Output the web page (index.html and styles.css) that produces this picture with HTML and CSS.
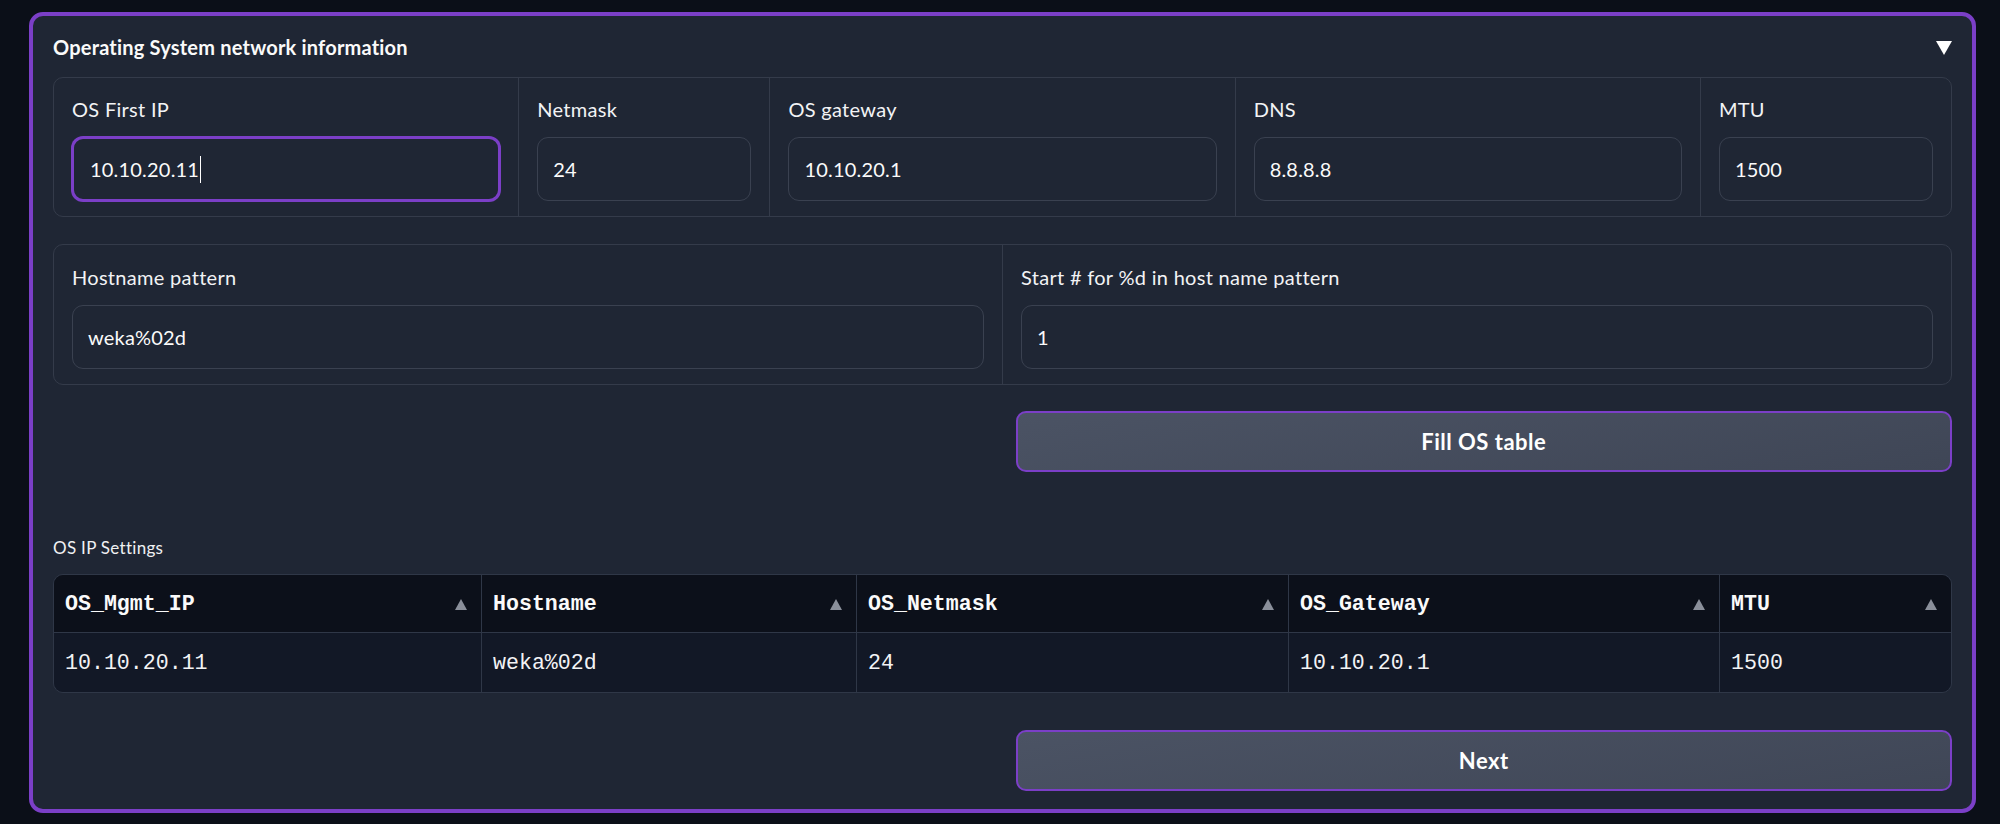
FILE: index.html
```html
<!DOCTYPE html>
<html lang="en">
<head>
<meta charset="utf-8">
<title>OS network</title>
<link rel="stylesheet" href="styles.css">
</head>
<body>
<div class="panel">
  <div class="panel-head">
    <span class="panel-title">Operating System network information</span>
    <svg class="caret-down" width="16" height="14" viewBox="0 0 16 14"><polygon points="0,0 16,0 8,14" fill="#ffffff"/></svg>
  </div>

  <div class="box">
    <div class="field w2">
      <div class="label">OS First IP</div>
      <div class="input focused"><span>10.10.20.11</span><span class="cursor"></span></div>
    </div>
    <div class="field w1">
      <div class="label">Netmask</div>
      <div class="input">24</div>
    </div>
    <div class="field w2">
      <div class="label">OS gateway</div>
      <div class="input">10.10.20.1</div>
    </div>
    <div class="field w2">
      <div class="label">DNS</div>
      <div class="input">8.8.8.8</div>
    </div>
    <div class="field w1">
      <div class="label">MTU</div>
      <div class="input">1500</div>
    </div>
  </div>

  <div class="box second">
    <div class="field w1">
      <div class="label">Hostname pattern</div>
      <div class="input">weka%02d</div>
    </div>
    <div class="field w1">
      <div class="label">Start # for %d in host name pattern</div>
      <div class="input">1</div>
    </div>
  </div>

  <div class="btn-row first-btn">
    <div></div>
    <div class="btn">Fill OS table</div>
  </div>

  <div class="section-label">OS IP Settings</div>

  <div class="table">
    <div class="th"><span>OS_Mgmt_IP</span><i class="sort"></i></div>
    <div class="th"><span>Hostname</span><i class="sort"></i></div>
    <div class="th"><span>OS_Netmask</span><i class="sort"></i></div>
    <div class="th"><span>OS_Gateway</span><i class="sort"></i></div>
    <div class="th last"><span>MTU</span><i class="sort"></i></div>
    <div class="td">10.10.20.11</div>
    <div class="td">weka%02d</div>
    <div class="td">24</div>
    <div class="td">10.10.20.1</div>
    <div class="td last">1500</div>
  </div>

  <div class="btn-row next-btn">
    <div></div>
    <div class="btn">Next</div>
  </div>
</div>
</body>
</html>
```

FILE: styles.css
```css
* { box-sizing: border-box; }
html, body { margin: 0; padding: 0; }
body {
  background: #0b0f18;
  width: 2000px;
  height: 824px;
  overflow: hidden;
  padding: 12px 24px 0 29px;
  font-family: Lato, "Liberation Sans", sans-serif;
  color: #fafafa;
}
.panel {
  width: 1947px;
  height: 801px;
  border: 4px solid #7b3fc7;
  border-radius: 14px;
  background: #1f2634;
  padding: 0 20px 0 20px;
  display: flex;
  flex-direction: column;
}
.panel > * { flex-shrink: 0; }
.panel-head {
  display: flex;
  align-items: center;
  justify-content: space-between;
  height: 61px;
  padding: 1px 0 0 0;
}
.panel-title {
  font-size: 20px;
  font-weight: 700;
  letter-spacing: 0.2px;
  line-height: 24px;
}
.caret-down { margin-top: 1px; }

.box {
  display: flex;
  border: 1px solid #343b4a;
  border-radius: 10px;
  height: 140px;
}
.box.second { margin-top: 27px; height: 141px; }
.field {
  flex-basis: 0;
  min-width: 0;
  padding: 19px 18px 0 18px;
  border-right: 1px solid #343b4a;
  display: flex;
  flex-direction: column;
}
.field:last-child { border-right: none; }
.w1 { flex-grow: 1; }
.w2 { flex-grow: 2; }
.label {
  font-size: 20px;
  letter-spacing: 0.3px;
  line-height: 24px;
  height: 24px;
  color: #f2f3f5;
}
.box.second .label { margin-top: 1px; }
.input {
  margin-top: 16px;
  height: 64px;
  border: 1px solid #3a4150;
  border-radius: 11px;
  background: #1f2634;
  padding: 0 15px;
  display: flex;
  align-items: center;
  font-size: 20px;
  letter-spacing: 0.2px;
  color: #fafafa;
}
.input.focused {
  border: 2px solid #7b3fc7;
  box-shadow: 0 0 0 1px #7b3fc7;
  padding-left: 16px;
}
.cursor {
  display: inline-block;
  width: 1px;
  height: 27px;
  background: #ffffff;
  margin-left: 1px;
}

.btn-row {
  display: grid;
  grid-template-columns: 1fr 1fr;
  column-gap: 64px;
}
.first-btn { margin-top: 26px; }
.next-btn { margin-top: 37px; }
.btn {
  height: 61px;
  margin-left: -19px;
  border: 2px solid #7b3fc7;
  border-radius: 10px;
  background: linear-gradient(170deg, #4b5364 0%, #3f4656 100%);
  display: flex;
  align-items: center;
  justify-content: center;
  font-size: 22px;
  letter-spacing: 0.5px;
  font-weight: 700;
  color: #ffffff;
}

.section-label {
  margin-top: 64px;
  font-size: 17px;
  letter-spacing: 0.3px;
  line-height: 24px;
  color: #f0f1f3;
}

.table {
  margin-top: 14px;
  display: grid;
  grid-template-columns: 428px 375px 432px 431px 1fr;
  border: 1px solid #2f3747;
  border-radius: 10px;
  overflow: hidden;
  font-family: "Liberation Mono", "DejaVu Sans Mono", monospace;
  font-size: 21.6px;
}
.th {
  height: 58px;
  background: #0c101a;
  border-right: 1px solid #2f3747;
  border-bottom: 1px solid #2f3747;
  display: flex;
  align-items: center;
  justify-content: space-between;
  padding: 0 14px 0 11px;
  font-weight: 700;
  color: #fafafa;
}
.td {
  height: 59px;
  background: #121826;
  border-right: 1px solid #2f3747;
  display: flex;
  align-items: center;
  padding: 0 11px;
  color: #f2f3f5;
}
.th.last, .td.last { border-right: none; }
.sort {
  width: 0;
  height: 0;
  border-left: 6px solid transparent;
  border-right: 6px solid transparent;
  border-bottom: 11px solid #8a8f9a;
  margin-top: 1px;
}
```
